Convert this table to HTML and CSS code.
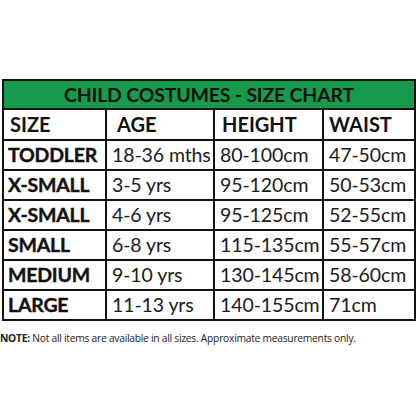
FILE: index.html
```html
<!DOCTYPE html>
<html>
<head>
<meta charset="utf-8">
<link rel="stylesheet" href="styles.css">
</head>
<body>
<div class="page">
  <table class="chart">
    <colgroup>
      <col class="c1"><col class="c2"><col class="c3"><col class="c4">
    </colgroup>
    <thead>
      <tr class="title-row"><th colspan="4">CHILD COSTUMES - SIZE CHART</th></tr>
      <tr class="head-row">
        <th class="h1">SIZE</th><th class="h2">AGE</th><th class="h3">HEIGHT</th><th class="h4">WAIST</th>
      </tr>
    </thead>
    <tbody>
      <tr><td class="size">TODDLER</td><td>18-36 mths</td><td>80-100cm</td><td>47-50cm</td></tr>
      <tr><td class="size">X-SMALL</td><td>3-5 yrs</td><td>95-120cm</td><td>50-53cm</td></tr>
      <tr><td class="size">X-SMALL</td><td>4-6 yrs</td><td>95-125cm</td><td>52-55cm</td></tr>
      <tr><td class="size">SMALL</td><td>6-8 yrs</td><td>115-135cm</td><td>55-57cm</td></tr>
      <tr><td class="size">MEDIUM</td><td>9-10 yrs</td><td>130-145cm</td><td>58-60cm</td></tr>
      <tr><td class="size">LARGE</td><td>11-13 yrs</td><td>140-155cm</td><td>71cm</td></tr>
    </tbody>
  </table>
  <p class="note"><b>NOTE:</b> Not all items are available in all sizes. Approximate measurements only.</p>
</div>
</body>
</html>
```
FILE: styles.css
```css
html, body {
  margin: 0;
  padding: 0;
  background: #fff;
}
.page {
  width: 416px;
  height: 416px;
  padding-top: 79px;
  box-sizing: border-box;
  font-family: Lato, "Open Sans", sans-serif;
  color: #111;
}
.chart {
  margin-left: 2px;
  width: 412px;
  border-collapse: collapse;
  table-layout: fixed;
}
.c1 { width: 103px; }
.c2 { width: 108px; }
.c3 { width: 109px; }
.c4 { width: 92px; }
.chart th, .chart td {
  border: 2px solid #111;
  height: 28px;
  padding: 0 0 0 5px;
  text-align: left;
  white-space: nowrap;
  font-size: 20px;
  line-height: 28px;
}
.title-row th {
  background: #179a4b;
  text-align: center;
  font-weight: 700;
  font-size: 19.5px;
  height: 27px;
  line-height: 27px;
  padding: 0;
  letter-spacing: -0.2px;
}
.head-row th {
  font-weight: 700;
  font-size: 20px;
  height: 29px;
  line-height: 29px;
}
.head-row .h1 { padding-left: 6px; }
.head-row .h2 { padding-left: 10px; }
.head-row .h3 { padding-left: 7px; }
.head-row .h4 { padding-left: 5px; }
.chart td {
  font-weight: 400;
  font-size: 19.5px;
  color: #1a1a1a;
  letter-spacing: -0.1px;
}
.chart td.size {
  font-weight: 700;
  font-size: 19.5px;
  padding-left: 4px;
  color: #111;
  letter-spacing: -0.2px;
  -webkit-text-stroke: 0.4px #111;
}
.note {
  margin: 10px 0 0 0;
  font-family: "Open Sans", sans-serif;
  font-size: 10.3px;
  letter-spacing: -0.27px;
  color: #222;
  white-space: nowrap;
}
.note b { font-weight: 700; }
```
